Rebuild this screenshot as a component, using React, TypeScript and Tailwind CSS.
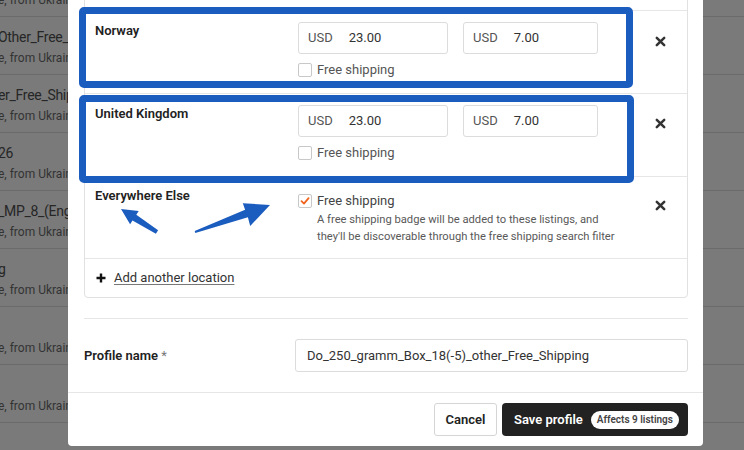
import React from "react";

interface BgRow {
    title: string;
    sub: string;
}

const bgRows: BgRow[] = [
    { title: "", sub: "e, from Ukraine" },
    { title: "Other_Free_Shipping", sub: "e, from Ukraine" },
    { title: "er_Free_Shipping", sub: "e, from Ukraine" },
    { title: "26", sub: "e, from Ukraine" },
    { title: "_MP_8_(English)", sub: "e, from Ukraine" },
    { title: "g", sub: "e, from Ukraine" },
    { title: "", sub: "e, from Ukraine" },
    { title: "", sub: "e, from Ukraine" },
    { title: "", sub: "" },
];

const CloseIcon: React.FC = () => (
    <svg width="11" height="11" viewBox="0 0 11 11">
        <path d="M1.8 1.8 L9.2 9.2 M9.2 1.8 L1.8 9.2" stroke="#333" strokeWidth="2.5" strokeLinecap="round" />
    </svg>
);

const PriceInput: React.FC<{ value: string; width: string }> = ({ value, width }) => (
    <div className={`${width} h-[32px] border border-[#dcdcdc] rounded-[3px] flex items-center pl-[9px] text-[13px]`}>
        <span className="text-[#555]">USD</span>
        <span className="ml-[16px] text-[#333]">{value}</span>
    </div>
);

const Checkbox: React.FC<{ checked?: boolean }> = ({ checked }) => (
    <div className="w-[14px] h-[14px] shrink-0 border border-[#c8c8c8] rounded-[2px] flex items-center justify-center bg-white">
        {checked && (
            <svg width="10" height="10" viewBox="0 0 10 10">
                <path d="M1.5 5.2 L4 7.6 L8.6 2.2" stroke="#f1641e" strokeWidth="1.8" fill="none" strokeLinecap="round" strokeLinejoin="round" />
            </svg>
        )}
    </div>
);

const LocationRow: React.FC<{ name: string; height: string; xTop: string }> = ({ name, height, xTop }) => (
    <div className={`flex ${height} border-b border-[#e6e6e6]`}>
        <div className="w-[213px] shrink-0 pl-[10px] pt-[11px] text-[13px] font-semibold text-[#222] leading-[18px]">
            {name}
        </div>
        <div className="w-[300px] shrink-0 pt-[11px]">
            <div className="flex gap-[15px]">
                <PriceInput value="23.00" width="w-[150px]" />
                <PriceInput value="7.00" width="w-[135px]" />
            </div>
            <div className="flex items-center mt-[9px]">
                <Checkbox />
                <span className="ml-[5px] text-[13px] text-[#555] leading-[14px]">Free shipping</span>
            </div>
        </div>
        <div className={`ml-[57px] ${xTop}`}>
            <CloseIcon />
        </div>
    </div>
);

export default function App() {
    return (
        <div className="relative w-[744px] h-[450px] overflow-hidden bg-[#7a7a7a] font-['Roboto',sans-serif]">
            {/* page behind the dialog */}
            <div className="-mt-[41px]">
                {bgRows.map((row, i) => (
                    <div key={i} className="h-[58px] border-b border-[#6b6b6b] pt-[11px] -ml-[2px]">
                        <div className="h-[18px] leading-[18px] text-[14px] tracking-[-0.3px] text-[#262626] whitespace-nowrap">{row.title}</div>
                        <div className="mt-[3px] leading-[18px] text-[12px] text-[#333] whitespace-nowrap">{row.sub}</div>
                    </div>
                ))}
            </div>

            {/* dialog */}
            <div className="absolute left-[68px] top-[-30px] w-[635px] h-[476px] bg-white rounded-b-[4px] flex flex-col">
                <div className="pt-[10px] pl-[16px] pr-[15px]">
                    <div className="border border-[#e1e1e1] rounded-[4px]">
                        <div className="h-[30px] border-b border-[#e6e6e6]" />
                        <LocationRow name="Norway" height="h-[83px]" xTop="pt-[25px]" />
                        <LocationRow name="United Kingdom" height="h-[83px]" xTop="pt-[24px]" />
                        <div className="flex h-[82px] border-b border-[#e6e6e6]">
                            <div className="w-[213px] shrink-0 pl-[10px] pt-[10px] text-[13px] font-semibold text-[#222] leading-[18px]">
                                Everywhere Else
                            </div>
                            <div className="w-[300px] shrink-0 pt-[17px]">
                                <div className="flex items-center">
                                    <Checkbox checked />
                                    <span className="ml-[5px] text-[13px] text-[#444] leading-[14px]">Free shipping</span>
                                </div>
                                <div className="ml-[19px] mt-[3px] text-[11.2px] leading-[17px] text-[#595959] whitespace-nowrap">
                                    <div>A free shipping badge will be added to these listings, and</div>
                                    <div>they'll be discoverable through the free shipping search filter</div>
                                </div>
                            </div>
                            <div className="ml-[57px] pt-[23px]">
                                <CloseIcon />
                            </div>
                        </div>
                        <div className="h-[38px] flex items-center pl-[11px] text-[13px] text-[#333]">
                            <svg width="10" height="10" viewBox="0 0 10 10">
                                <path d="M5 0.5 V9.5 M0.5 5 H9.5" stroke="#111" strokeWidth="2.4" />
                            </svg>
                            <span className="ml-[8px] underline underline-offset-2 decoration-[#777]">Add another location</span>
                        </div>
                    </div>
                    <div className="mt-[20px] h-px bg-[#e6e6e6]" />
                    <div className="mt-[20px] flex items-center">
                        <div className="w-[211px] shrink-0 text-[13px] font-semibold text-[#222]">
                            Profile name <span className="text-[#777] font-normal">*</span>
                        </div>
                        <div className="flex-1 h-[33px] border border-[#dcdcdc] rounded-[3px] flex items-center pl-[11px] text-[13px] text-[#333]">
                            Do_250_gramm_Box_18(-5)_other_Free_Shipping
                        </div>
                    </div>
                </div>
                <div className="mt-[20px] border-t border-[#e6e6e6] flex justify-end gap-[5px] pt-[10px] pr-[15px]">
                    <button className="w-[63px] h-[33px] shrink-0 border border-[#d5d5d5] rounded-[3px] text-[13px] font-semibold text-[#222]">
                        Cancel
                    </button>
                    <button className="w-[186px] h-[33px] shrink-0 bg-[#222] rounded-[4px] flex items-center pl-[12px] text-[13px] font-semibold text-white whitespace-nowrap">
                        Save profile
                        <span className="ml-[8px] h-[18px] px-[6px] rounded-full bg-white text-[#444] text-[10px] font-semibold flex items-center whitespace-nowrap">
                            Affects 9 listings
                        </span>
                    </button>
                </div>
            </div>

            {/* annotation marks */}
            <div className="absolute left-[79px] top-[7px] w-[554px] h-[81px] border-[7px] border-[#1b5cbf] rounded-[5px]" />
            <div className="absolute left-[79px] top-[95px] w-[555px] h-[88px] border-[7px] border-[#1b5cbf] rounded-[5px]" />
            <svg className="absolute left-0 top-0" width="744" height="450" viewBox="0 0 744 450">
                <polygon
                    points="121,209 138.7,210.9 136.3,214.7 158.1,230.3 155.9,233.7 132.5,220.5 130.1,224.3"
                    fill="#1b5cbf"
                />
                <polygon
                    points="194.7,231.1 245.1,209.7 242.8,203.2 270,205 250.2,226 247.9,217.3 195.3,232.9"
                    fill="#1b5cbf"
                />
            </svg>
        </div>
    );
}
